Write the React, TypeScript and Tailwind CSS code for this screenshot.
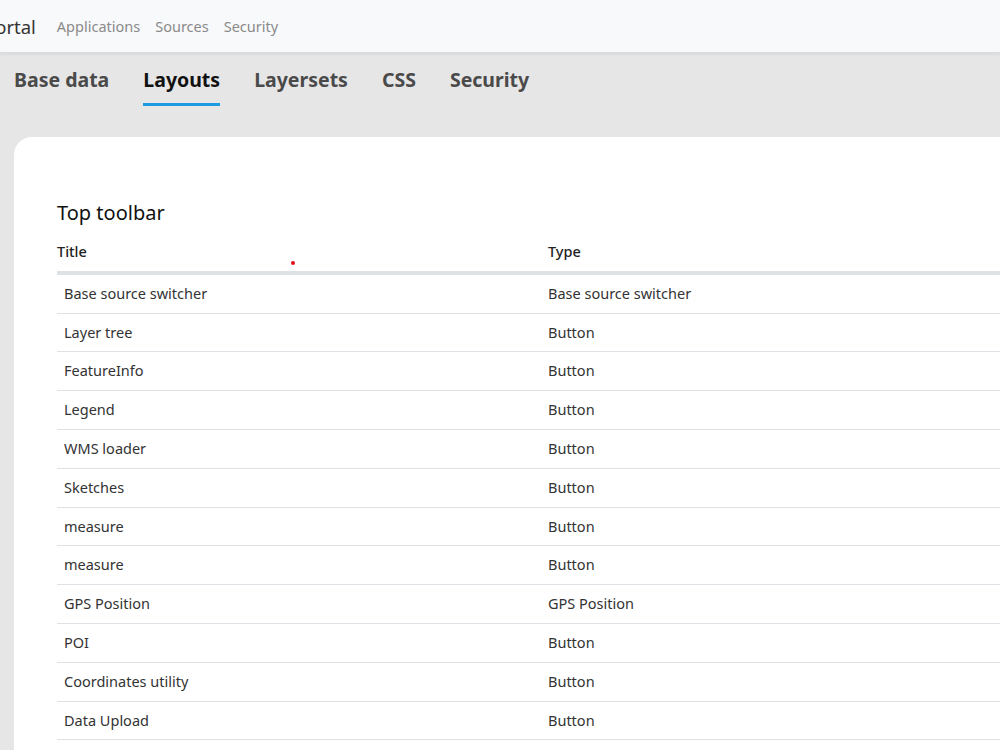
const NAV = ["Applications", "Sources", "Security"];
const TABS = ["Base data", "Layouts", "Layersets", "CSS", "Security"];

const ROWS: [string, string][] = [
  ["Base source switcher", "Base source switcher"],
  ["Layer tree", "Button"],
  ["FeatureInfo", "Button"],
  ["Legend", "Button"],
  ["WMS loader", "Button"],
  ["Sketches", "Button"],
  ["measure", "Button"],
  ["measure", "Button"],
  ["GPS Position", "GPS Position"],
  ["POI", "Button"],
  ["Coordinates utility", "Button"],
  ["Data Upload", "Button"],
];

export default function App() {
  return (
    <div
      className="h-[750px] w-[1000px] overflow-hidden bg-[#e6e6e6]"
      style={{ fontFamily: '"Noto Sans", "Open Sans", sans-serif' }}
    >
      {/* Top bar */}
      <header className="flex h-[53px] items-center border-b border-[#dcdcdc] bg-[#f8f9fa] pt-[2px] shadow-[0_1px_3px_rgba(0,0,0,0.08)]">
        <div className="-ml-[16px] flex items-center">
          <span className="text-[18.5px] text-[#333]">Portal</span>
          <nav className="ml-[21px] flex gap-[15px] text-[14.5px] text-[#8a8a8a]">
            {NAV.map((n) => (
              <span key={n}>{n}</span>
            ))}
          </nav>
        </div>
      </header>

      {/* Tabs */}
      <div className="flex gap-[34px] pl-[14px] pt-[12px]">
        {TABS.map((t) => (
          <div key={t} className="flex flex-col">
            <span
              className={
                t === "Layouts"
                  ? "text-[19.5px] font-bold leading-[30px] text-[#111]"
                  : "text-[19.5px] font-bold leading-[30px] text-[#4a4a4a]"
              }
            >
              {t}
            </span>
            <span
              className={
                t === "Layouts"
                  ? "mt-[8px] h-[3px] bg-[#1a9be2]"
                  : "mt-[8px] h-[3px] bg-transparent"
              }
            />
          </div>
        ))}
      </div>

      {/* Card */}
      <div className="ml-[14px] mt-[31px] h-[700px] rounded-tl-[18px] bg-white pl-[43px] pt-[62px]">
        <h2 className="text-[20px] leading-[28px] text-[#111]">Top toolbar</h2>

        <div className="relative mt-[14px]">
          <span className="absolute left-[234px] top-[20px] h-[4px] w-[4px] rounded-full bg-[#e0101a]" />
          <div className="grid grid-cols-[491px_1fr] border-b-4 border-[#dee2e6] pb-[8px] text-[14.5px] font-medium text-[#222]">
            <span>Title</span>
            <span>Type</span>
          </div>
          {ROWS.map(([title, type], i) => (
            <div
              key={i}
              className="grid h-[38.8px] grid-cols-[491px_1fr] items-center border-b border-[#dee2e6] text-[14.5px] text-[#333]"
            >
              <span className="pl-[7px]">{title}</span>
              <span>{type}</span>
            </div>
          ))}
        </div>
      </div>
    </div>
  );
}
